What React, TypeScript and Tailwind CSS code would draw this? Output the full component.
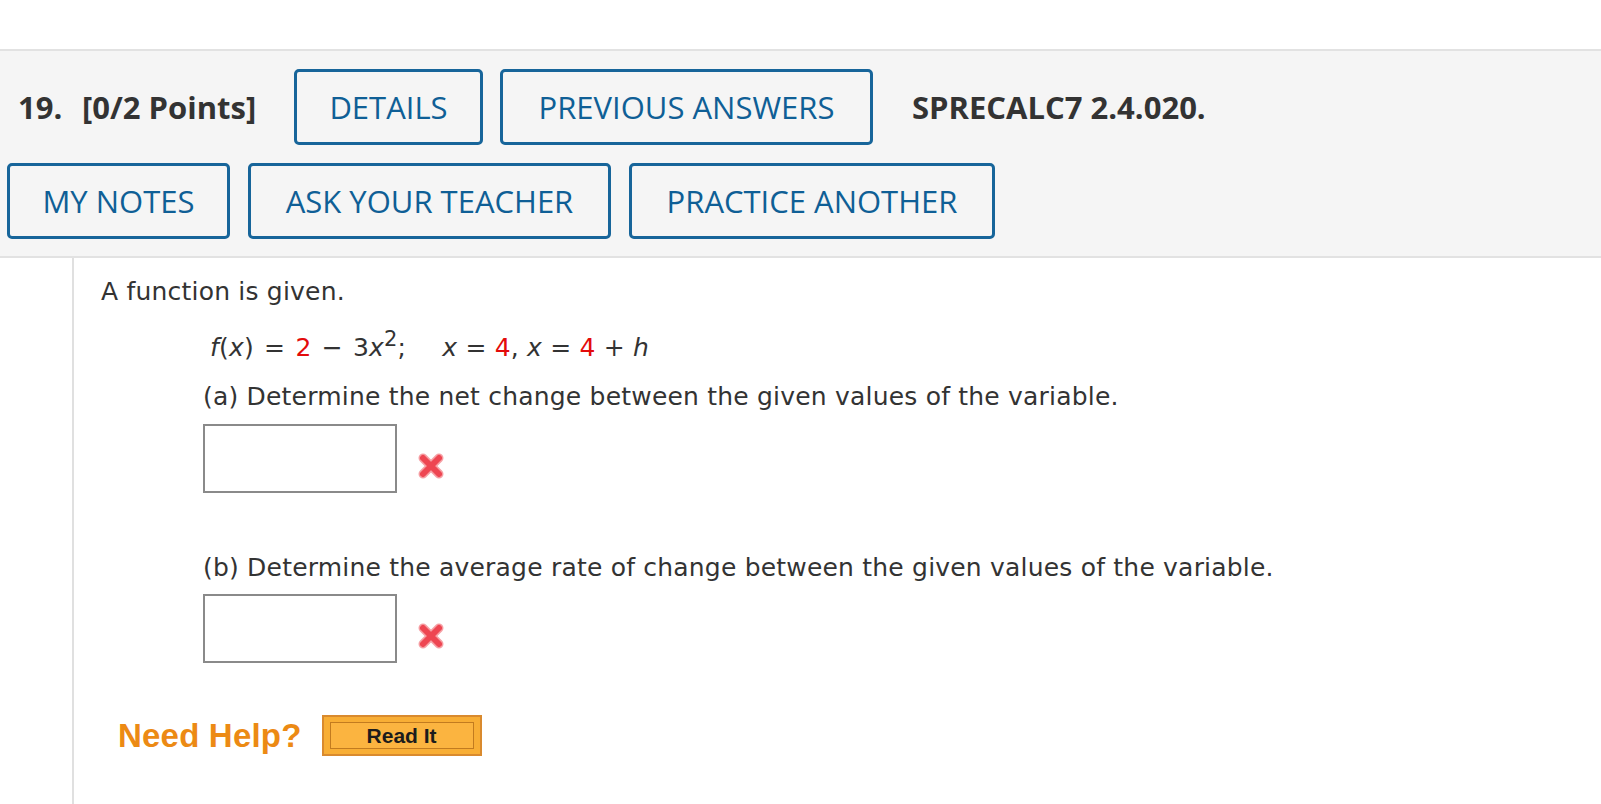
import React from "react";

function OutlineButton({ label, width }: { label: string; width: string }) {
	return (
		<div
			className={`${width} h-[76px] flex items-center justify-center border-[3px] border-[#17659a] rounded-[5px] text-[#0f5f96] text-[31px] leading-none`}
		>
			{label}
		</div>
	);
}

function WrongMark() {
	return (
		<svg width="28" height="28" viewBox="0 0 28 28" className="ml-[20px] mt-[28px]">
			<path d="M6 6 L22 22 M22 6 L6 22" stroke="#f6a0a5" strokeWidth="9" strokeLinecap="round" />
			<path d="M6 6 L22 22 M22 6 L6 22" stroke="#ee4652" strokeWidth="6" strokeLinecap="round" />
		</svg>
	);
}

function AnswerRow() {
	return (
		<div className="flex items-start ml-[102px]">
			<div className="w-[194px] h-[69px] border-2 border-[#8a8a8a] bg-white" />
			<WrongMark />
		</div>
	);
}

export default function App() {
	return (
		<div className="w-[1601px] h-[804px] bg-white flex flex-col overflow-hidden">
			<div className="h-[49px]" />
			<div className="bg-[#f5f5f5] border-y-2 border-[#e2e2e2] pt-[18px] pb-[17px] pl-[7px] font-['Open_Sans',sans-serif]">
				<div className="flex items-center">
					<p className="ml-[11px] text-[31px] font-bold text-[#333] w-[64px]">19.</p>
					<p className="text-[31px] font-bold text-[#333] w-[212px]">[0/2 Points]</p>
					<div className="flex gap-[17px]">
						<OutlineButton label="DETAILS" width="w-[189px]" />
						<OutlineButton label="PREVIOUS ANSWERS" width="w-[373px]" />
					</div>
					<p className="ml-[39px] text-[31px] font-bold text-[#333]">SPRECALC7 2.4.020.</p>
				</div>
				<div className="flex gap-[18px] mt-[18px]">
					<OutlineButton label="MY NOTES" width="w-[223px]" />
					<OutlineButton label="ASK YOUR TEACHER" width="w-[363px]" />
					<OutlineButton label="PRACTICE ANOTHER" width="w-[366px]" />
				</div>
			</div>
			<div className="flex flex-1">
				<div className="w-[74px] border-r-2 border-[#e0e0e0]" />
				<div className="pl-[27px] pt-[17px] font-['DejaVu_Sans',sans-serif] text-[25px] tracking-[0.2px] leading-[33px] text-[#333]">
					<p>A function is given.</p>
					<p className="ml-[109px] mt-[23px]">
						<span className="[word-spacing:2px]">
							<i>f</i>(<i>x</i>) = <span className="text-[#e30b0b]">2</span> − 3<i>x</i>
							<sup className="text-[21px]">2</sup>;
						</span>
						<span className="inline-block w-[36px]" />
						<i>x</i> = <span className="text-[#e30b0b]">4</span>, <i>x</i> ={" "}
						<span className="text-[#e30b0b]">4</span> + <i>h</i>
					</p>
					<p className="ml-[102px] mt-[16px]">(a) Determine the net change between the given values of the variable.</p>
					<div className="mt-[11px]">
						<AnswerRow />
					</div>
					<p className="ml-[102px] mt-[58px]">(b) Determine the average rate of change between the given values of the variable.</p>
					<div className="mt-[10px]">
						<AnswerRow />
					</div>
					<div className="flex items-center mt-[52px] ml-[17px]">
						<p className="font-['Liberation_Sans',sans-serif] font-bold text-[33px] text-[#ec8a14] leading-none">Need Help?</p>
						<div className="ml-[20px] w-[160px] h-[41px] border-2 border-[#d98a2e] bg-[#f8ae35] p-[5px] px-[6px]">
							<div className="w-full h-full border border-[#c27b1f] bg-[#fbb440] flex items-center justify-center font-['Liberation_Sans',sans-serif] font-bold text-[21px] tracking-normal text-[#1c1c1c] leading-none">
								Read It
							</div>
						</div>
					</div>
				</div>
			</div>
		</div>
	);
}
